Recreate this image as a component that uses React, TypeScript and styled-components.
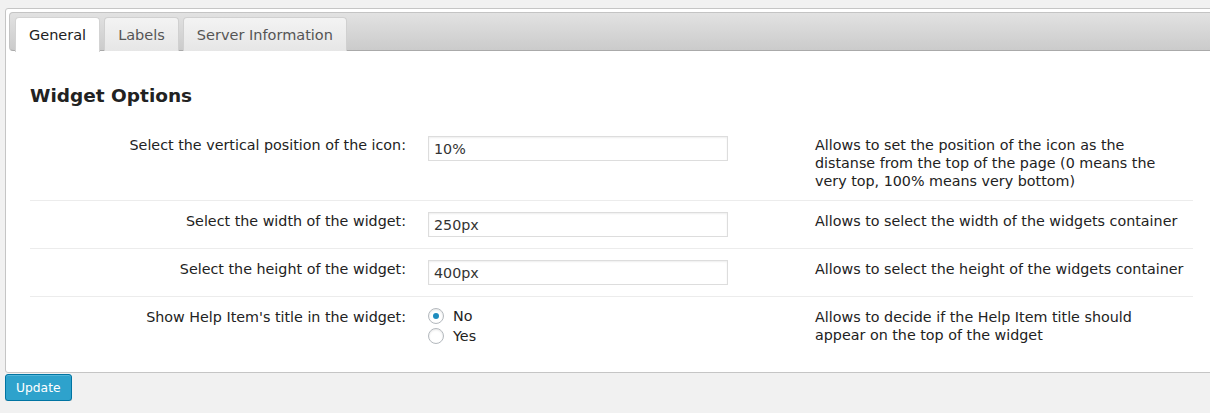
import styled, { createGlobalStyle } from "styled-components";

const GlobalStyle = createGlobalStyle`
  html, body {
    margin: 0;
    padding: 0;
    background: #f1f1f1;
    overflow: hidden;
  }
  body {
    font-family: "DejaVu Sans", Verdana, sans-serif;
    font-size: 14.3px;
    color: #222;
  }
`;

interface Option {
  label: string;
  description: string;
  value?: string;
  radios?: string[];
  checked?: string;
}

const options: Option[] = [
  {
    label: "Select the vertical position of the icon:",
    value: "10%",
    description:
      "Allows to set the position of the icon as the distanse from the top of the page (0 means the very top, 100% means very bottom)",
  },
  {
    label: "Select the width of the widget:",
    value: "250px",
    description: "Allows to select the width of the widgets container",
  },
  {
    label: "Select the height of the widget:",
    value: "400px",
    description: "Allows to select the height of the widgets container",
  },
  {
    label: "Show Help Item's title in the widget:",
    radios: ["No", "Yes"],
    checked: "No",
    description:
      "Allows to decide if the Help Item title should appear on the top of the widget",
  },
];

const tabs = ["General", "Labels", "Server Information"];

function App(): JSX.Element {
  return (
    <Page>
      <GlobalStyle />
      <Panel>
        <TabBar>
          {tabs.map((tab, i) => (
            <Tab key={tab} active={i === 0}>
              {tab}
            </Tab>
          ))}
        </TabBar>
        <PanelBody>
          <SectionTitle>Widget Options</SectionTitle>
          <FormTable>
            {options.map((opt) => (
              <FormRow key={opt.label}>
                <LabelCell>{opt.label}</LabelCell>
                <FieldCell>
                  {opt.radios ? (
                    <RadioList>
                      {opt.radios.map((r) => (
                        <RadioOption key={r}>
                          <RadioDot checked={r === opt.checked} />
                          {r}
                        </RadioOption>
                      ))}
                    </RadioList>
                  ) : (
                    <TextInput defaultValue={opt.value} />
                  )}
                </FieldCell>
                <DescCell>{opt.description}</DescCell>
              </FormRow>
            ))}
          </FormTable>
        </PanelBody>
      </Panel>
      <UpdateButton>Update</UpdateButton>
    </Page>
  );
}

const Page = styled.div`
  padding: 8px 0 0 5px;
  width: 1240px;
`;

const Panel = styled.div`
  width: 1213px;
  background: #fff;
  border: 1px solid #c5c5c5;
  border-radius: 3px;
  padding: 3px;
  box-sizing: border-box;
`;

const TabBar = styled.div`
  display: flex;
  gap: 4px;
  height: 39px;
  padding: 4px 0 0 5px;
  box-sizing: border-box;
  border: 1px solid #c4c4c4;
  border-bottom-color: #aaa;
  border-radius: 4px;
  background: linear-gradient(#e2e2e2, #cbcbcb);
`;

const Tab = styled.div<{ active?: boolean }>`
  height: ${(p) => (p.active ? 34 : 33)}px;
  padding: 0 13px;
  display: flex;
  align-items: center;
  font-size: 14.5px;
  color: ${(p) => (p.active ? "#222" : "#555")};
  background: ${(p) => (p.active ? "#fff" : "linear-gradient(#f3f3f3, #e6e6e6)")};
  border: 1px solid ${(p) => (p.active ? "#d3d3d3" : "#d0d0d0")};
  border-bottom: none;
  border-radius: 4px 4px 0 0;
`;

const PanelBody = styled.div`
  padding: 34px 16px 12px 21px;
`;

const SectionTitle = styled.h2`
  margin: 0 0 18px;
  font-size: 18.5px;
  font-weight: bold;
  color: #222;
  line-height: 22px;
`;

const FormTable = styled.div`
  width: 1163px;
`;

const FormRow = styled.div`
  display: grid;
  grid-template-columns: 386px 389px 1fr;
  border-top: 1px solid #ececec;
  &:first-child {
    border-top: none;
  }
`;

const LabelCell = styled.div`
  padding: 11px 10px 11px 0;
  text-align: right;
  line-height: 18px;
  color: #222;
`;

const FieldCell = styled.div`
  padding: 11px 0 11px 12px;
`;

const DescCell = styled.div`
  padding: 11px 0 10px 10px;
  max-width: 371px;
  line-height: 18px;
  color: #222;
`;

const TextInput = styled.input`
  display: block;
  width: 300px;
  height: 25px;
  box-sizing: border-box;
  border: 1px solid #ddd;
  box-shadow: inset 0 1px 2px rgba(0, 0, 0, 0.07);
  padding: 3px 5px;
  font-family: "DejaVu Sans", Verdana, sans-serif;
  font-size: 14.3px;
  color: #333;
  outline: none;
`;

const RadioList = styled.div`
  display: flex;
  flex-direction: column;
  margin-top: -2px;
`;

const RadioOption = styled.label`
  display: flex;
  align-items: center;
  gap: 9px;
  height: 20px;
  font-size: 14.3px;
  color: #222;
`;

const RadioDot = styled.span<{ checked?: boolean }>`
  width: 16px;
  height: 16px;
  box-sizing: border-box;
  border-radius: 50%;
  border: 1px solid #b4b9be;
  background: #fff;
  box-shadow: inset 0 1px 2px rgba(0, 0, 0, 0.1);
  position: relative;
  &::after {
    content: "";
    display: ${(p) => (p.checked ? "block" : "none")};
    position: absolute;
    left: 4px;
    top: 4px;
    width: 6px;
    height: 6px;
    border-radius: 50%;
    background: #1e8cbe;
  }
`;

const UpdateButton = styled.button`
  display: block;
  margin-top: 1px;
  height: 27px;
  padding: 0 10px;
  background: #2ea2cc;
  border: 1px solid #0074a2;
  border-radius: 3px;
  box-shadow: inset 0 1px 0 rgba(120, 200, 230, 0.5), 0 1px 0 rgba(0, 0, 0, 0.15);
  color: #fff;
  font-family: "DejaVu Sans", Verdana, sans-serif;
  font-size: 12.3px;
`;

export default App;
